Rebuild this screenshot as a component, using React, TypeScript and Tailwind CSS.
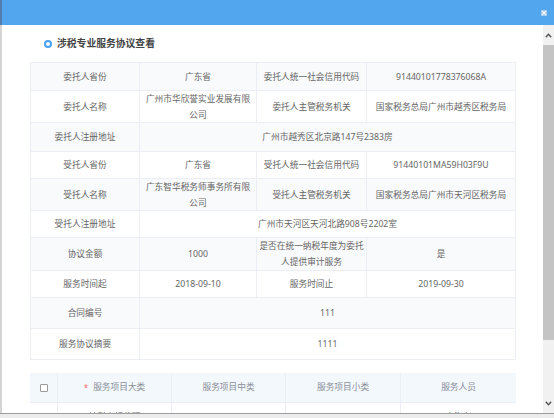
import React from "react";

type Row = {
  h: number;
  cells: { w: number; lines: string[]; label?: boolean }[];
};

const L = (t: string) => [t];

const rows: Row[] = [
  { h: 28, cells: [
    { w: 109, lines: L("委托人省份") },
    { w: 117, lines: L("广东省") },
    { w: 110, lines: L("委托人统一社会信用代码") },
    { w: 149, lines: L("91440101778376068A") },
  ] },
  { h: 32, cells: [
    { w: 109, lines: L("委托人名称") },
    { w: 117, lines: ["广州市华欣誉实业发展有限", "公司"] },
    { w: 110, lines: L("委托人主管税务机关") },
    { w: 149, lines: L("国家税务总局广州市越秀区税务局") },
  ] },
  { h: 29, cells: [
    { w: 109, lines: L("委托人注册地址") },
    { w: 376, lines: L("广州市越秀区北京路147号2383房") },
  ] },
  { h: 27, cells: [
    { w: 109, lines: L("受托人省份") },
    { w: 117, lines: L("广东省") },
    { w: 110, lines: L("受托人统一社会信用代码") },
    { w: 149, lines: L("91440101MA59H03F9U") },
  ] },
  { h: 32, cells: [
    { w: 109, lines: L("受托人名称") },
    { w: 117, lines: ["广东智华税务师事务所有限", "公司"] },
    { w: 110, lines: L("受托人主管税务机关") },
    { w: 149, lines: L("国家税务总局广州市天河区税务局") },
  ] },
  { h: 27, cells: [
    { w: 109, lines: L("受托人注册地址") },
    { w: 376, lines: L("广州市天河区天河北路908号2202室") },
  ] },
  { h: 33, cells: [
    { w: 109, lines: L("协议金额") },
    { w: 117, lines: L("1000") },
    { w: 110, lines: ["是否在统一纳税年度为委托", "人提供审计服务"] },
    { w: 149, lines: L("是") },
  ] },
  { h: 27, cells: [
    { w: 109, lines: L("服务时间起") },
    { w: 117, lines: L("2018-09-10") },
    { w: 110, lines: L("服务时间止") },
    { w: 149, lines: L("2019-09-30") },
  ] },
  { h: 31, cells: [
    { w: 109, lines: L("合同编号") },
    { w: 376, lines: L("111") },
  ] },
  { h: 31, cells: [
    { w: 109, lines: L("服务协议摘要") },
    { w: 376, lines: L("1111") },
  ] },
];

function Checkbox() {
  return <div className="w-[8px] h-[8px] border border-[#9a9a9a] bg-white rounded-[1px]" />;
}

export default function App() {
  return (
    <div className="w-[554px] h-[418px] overflow-hidden bg-[#ebebeb] font-['Noto_Sans','Noto_Sans_CJK_SC',sans-serif] flex flex-col">
      <div className="flex h-[413px] shrink-0">
        {/* page behind strip */}
        <div className="w-[2px] flex flex-col shrink-0">
          <div className="h-[25px] bg-[#4f7faa]" />
          <div className="flex-1 bg-[#d4d4d4]" />
        </div>
        {/* modal */}
        <div className="flex-1 flex flex-col bg-white">
          <div className="h-[25px] shrink-0 bg-[#52a6ee] flex items-center justify-end pr-[7px]">
            <svg width="6" height="6" viewBox="0 0 6 6">
              <rect x="0" y="0" width="6" height="6" fill="#9fc6ea" />
              <path d="M1 1 L5 5 M5 1 L1 5" stroke="#eef4fa" strokeWidth="1.2" />
            </svg>
          </div>
          <div className="flex-1 flex min-h-0">
            <div className="flex-1 overflow-hidden pl-[28px] pt-[11px]">
              <div className="h-[16px] flex items-center pl-[14px] gap-[5px]">
                <div className="w-[8px] h-[8px] rounded-full border-[2px] border-[#4a9ff0]" />
                <span className="text-[9.8px] leading-[16px] font-bold text-[#444]">涉税专业服务协议查看</span>
              </div>
              <div className="mt-[10px] w-[486px] border-l border-t border-[#ebeef5] text-[8.7px] text-[#666]">
                {rows.map((r, i) => (
                  <div
                    key={i}
                    className={`flex border-b border-[#ebeef5] ${i % 2 === 0 ? "bg-[#f9fafc]" : "bg-white"}`}
                    style={{ height: r.h }}
                  >
                    {r.cells.map((c, j) => (
                      <div
                        key={j}
                        className="border-r border-[#ebeef5] flex flex-col items-center justify-center shrink-0"
                        style={{ width: c.w }}
                      >
                        {c.lines.map((t, k) => (
                          <div key={k} className="whitespace-nowrap leading-[16px]">{t}</div>
                        ))}
                      </div>
                    ))}
                  </div>
                ))}
              </div>
              <div className="mt-[13px] w-[486px] text-[8.7px]">
                <div className="flex h-[30px] bg-[#f3f8fd] border-b border-[#ebeef5] text-[#8a8f99]">
                  <div className="w-[28px] flex items-center justify-center border-r border-[#ebeef5]"><Checkbox /></div>
                  <div className="w-[114px] flex items-center justify-center border-r border-[#ebeef5] gap-[5px]">
                    <span className="text-[#f56c6c] text-[8px]">*</span>
                    <span>服务项目大类</span>
                  </div>
                  <div className="w-[114px] flex items-center justify-center border-r border-[#ebeef5]">服务项目中类</div>
                  <div className="w-[115px] flex items-center justify-center border-r border-[#ebeef5]">服务项目小类</div>
                  <div className="w-[115px] flex items-center justify-center">服务人员</div>
                </div>
                <div className="flex h-[30px] text-[#666]">
                  <div className="w-[28px] flex items-center justify-center border-r border-[#ebeef5]"><Checkbox /></div>
                  <div className="w-[114px] flex items-center justify-center border-r border-[#ebeef5]">纳税申报代理</div>
                  <div className="w-[114px] flex items-center justify-center border-r border-[#ebeef5]"></div>
                  <div className="w-[115px] flex items-center justify-center border-r border-[#ebeef5]"></div>
                  <div className="w-[115px] flex items-center justify-center">李海兴</div>
                </div>
              </div>
            </div>
            {/* scrollbar */}
            <div className="w-[11px] shrink-0 bg-[#f1f1f1] flex flex-col">
              <div className="h-[20px] flex items-center justify-center">
                <svg width="7" height="5" viewBox="0 0 7 5">
                  <path d="M0.8 4.2 L3.5 1.3 L6.2 4.2" fill="none" stroke="#505050" strokeWidth="1.3" />
                </svg>
              </div>
              <div className="h-[295px] bg-[#c4c4c4] mx-[0px]" />
              <div className="flex-1" />
              <div className="h-[20px] flex items-center justify-center">
                <svg width="7" height="5" viewBox="0 0 7 5">
                  <path d="M0.8 0.8 L3.5 3.7 L6.2 0.8" fill="none" stroke="#505050" strokeWidth="1.3" />
                </svg>
              </div>
            </div>
          </div>
        </div>
      </div>
      <div className="h-[1px] bg-[#9c9c9c] shrink-0" />
      <div className="flex-1 bg-[#ececec]" />
    </div>
  );
}
